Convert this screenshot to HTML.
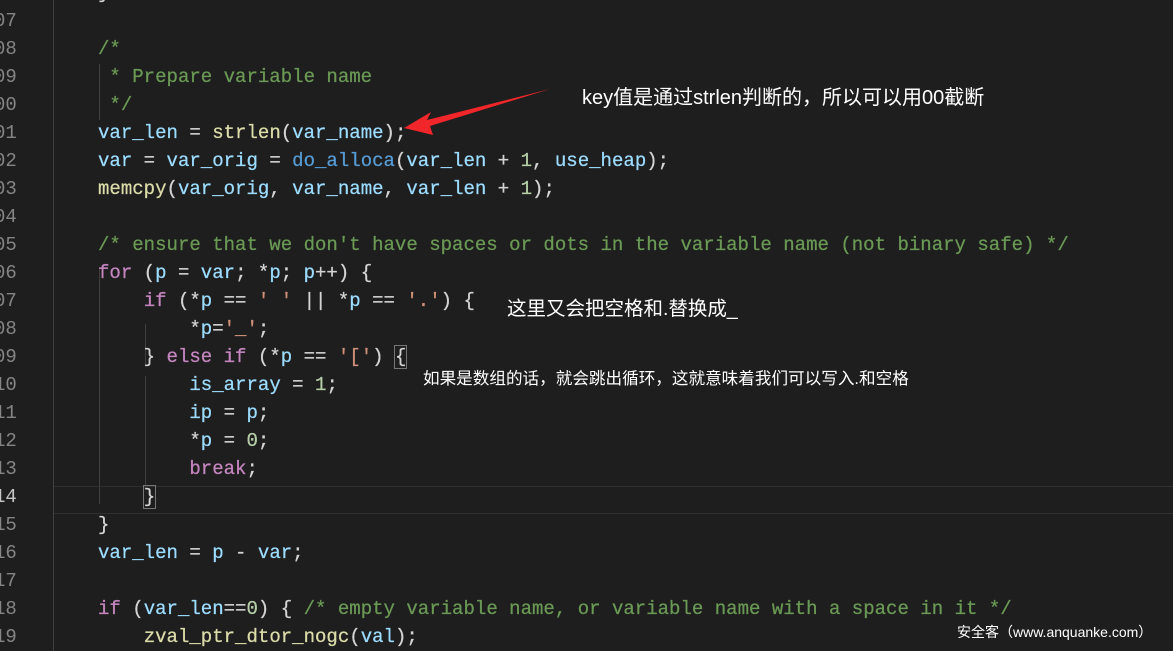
<!DOCTYPE html>
<html><head><meta charset="utf-8"><style>
body{margin:0;width:1173px;height:651px;background:#1e1e1e;overflow:hidden;position:relative;font-family:"Liberation Mono",monospace}
.ln{position:absolute;left:-6px;width:20px;font-size:19px;color:#858585;line-height:28px;text-align:right}
.c{position:absolute;left:98px;font-size:19.05px;line-height:28px;color:#d4d4d4;white-space:pre;-webkit-text-stroke:0.25px currentColor}
.v{color:#9cdcfe}.k{color:#c586c0}.f{color:#dcdcaa}.g{color:#6a9955}.n{color:#b5cea8}.s{color:#ce9178}.b{color:#569cd6}
.gd{position:absolute;width:1px;background:#404040}
.note{position:absolute;color:#fff;font-family:"Liberation Sans","Noto Sans CJK SC",sans-serif;white-space:nowrap}
</style></head><body>
<div class="gd" style="left:53px;top:0;height:651px"></div>
<div class="gd" style="left:99px;top:268px;height:236px"></div>
<div class="gd" style="left:145px;top:324px;height:40px"></div>
<div class="gd" style="left:145px;top:376px;height:112px"></div>
<div class="gd" style="left:99px;top:64px;height:56px"></div>
<div style="position:absolute;left:54px;top:486px;width:1119px;height:26px;border-top:1px solid #303030;border-bottom:1px solid #303030"></div>
<div id="lines"></div>
<script>
const L=[
["06",'}'],["07",""],["08",'<span class="g">/*</span>'],["09",'<span class="g"> * Prepare variable name</span>'],["00",'<span class="g"> */</span>'],
["01",'<span class="v">var_len</span> = <span class="f">strlen</span>(<span class="v">var_name</span>);'],
["02",'<span class="v">var</span> = <span class="v">var_orig</span> = <span class="b">do_alloca</span>(<span class="v">var_len</span> + <span class="n">1</span>, <span class="v">use_heap</span>);'],
["03",'<span class="f">memcpy</span>(<span class="v">var_orig</span>, <span class="v">var_name</span>, <span class="v">var_len</span> + <span class="n">1</span>);'],
["04",""],
["05",'<span class="g">/* ensure that we don\'t have spaces or dots in the variable name (not binary safe) */</span>'],
["06",'<span class="k">for</span> (<span class="v">p</span> = <span class="v">var</span>; *<span class="v">p</span>; <span class="v">p</span>++) {'],
["07",'    <span class="k">if</span> (*<span class="v">p</span> == <span class="s">\' \'</span> || *<span class="v">p</span> == <span class="s">\'.\'</span>) {'],
["08",'        *<span class="v">p</span>=<span class="s">\'_\'</span>;'],
["09",'    } <span class="k">else if</span> (*<span class="v">p</span> == <span class="s">\'[\'</span>) <span style="outline:1px solid #777">{</span>'],
["10",'        <span class="v">is_array</span> = <span class="n">1</span>;'],
["11",'        <span class="v">ip</span> = <span class="v">p</span>;'],
["12",'        *<span class="v">p</span> = <span class="n">0</span>;'],
["13",'        <span class="k">break</span>;'],
["14",'    <span style="outline:1px solid #777">}</span>'],
["15",'}'],
["16",'<span class="v">var_len</span> = <span class="v">p</span> - <span class="v">var</span>;'],
["17",""],
["18",'<span class="k">if</span> (<span class="v">var_len</span>==<span class="n">0</span>) { <span class="g">/* empty variable name, or variable name with a space in it */</span>'],
["19",'    <span class="f">zval_ptr_dtor_nogc</span>(<span class="v">val</span>);']];
let h="";L.forEach((l,i)=>{const t=-21+28*i;h+=`<div class="ln" style="top:${t}px;${l[0]=="14"?"color:#c6c6c6":""}">${i?l[0]:""}</div><div class="c" style="top:${t}px">${l[1]}</div>`});
document.getElementById("lines").innerHTML=h;
</script>
<svg style="position:absolute;left:0;top:0" width="1173" height="651"><polygon points="550,89 427,120 431,112 404,128 433,135 430,126" fill="#f0262a"/></svg>
<div class="note" style="left:582px;top:81px;font-size:20px">key值是通过strlen判断的，所以可以用00截断</div>
<div class="note" style="left:507px;top:292px;font-size:19.5px">这里又会把空格和.替换成_</div>
<div class="note" style="left:423px;top:365px;font-size:16.6px">如果是数组的话，就会跳出循环，这就意味着我们可以写入.和空格</div>
<div class="note" style="left:957px;top:622px;font-size:14px">安全客（www.anquanke.com）</div>
</body></html>
